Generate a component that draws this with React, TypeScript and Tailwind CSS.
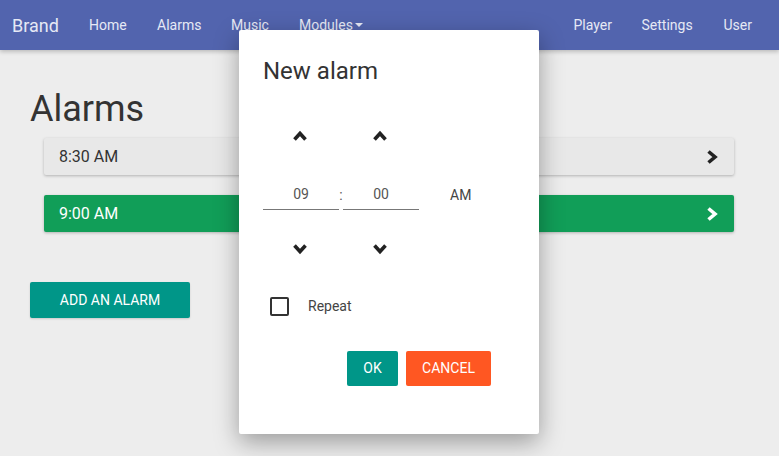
import React from "react";

function Chev({ dir, className }: { dir: "up" | "down" | "right"; className?: string }) {
  const pts =
    dir === "right" ? "3.5,1.5 10,7 3.5,12.5" : dir === "up" ? "1.5,10.5 7,4.5 12.5,10.5" : "1.5,3.5 7,9.5 12.5,3.5";
  return (
    <svg viewBox="0 0 14 14" className={className} fill="none">
      <polyline points={pts} stroke="currentColor" strokeWidth="3.6" strokeLinecap="butt" strokeLinejoin="miter" />
    </svg>
  );
}

export default function App() {
  return (
    <div className="relative w-[779px] h-[456px] overflow-hidden bg-[#ededed]" style={{ fontFamily: "Roboto, 'Liberation Sans', sans-serif" }}>
      <nav className="h-[50px] bg-[#5264ae] flex items-center text-[#e6e9f5] text-[14px] shadow-[0_2px_4px_rgba(0,0,0,0.2)]">
        <span className="ml-[12px] text-[18px] w-[77px]">Brand</span>
        <span className="w-[68px]">Home</span>
        <span className="w-[74px]">Alarms</span>
        <span className="w-[68px]">Music</span>
        <span className="flex items-center">Modules<span className="ml-[2px] inline-block w-0 h-0 border-l-[4px] border-r-[4px] border-t-[4px] border-l-transparent border-r-transparent border-t-[#e6e9f5]" /></span>
        <div className="ml-auto flex items-center mr-[27px]">
          <span className="w-[68px]">Player</span>
          <span className="w-[82px]">Settings</span>
          <span>User</span>
        </div>
      </nav>
      <main className="px-[30px] pt-[40px]">
        <h1 className="text-[36px] leading-[38px] text-[#333] ml-0">Alarms</h1>
        <div className="ml-[14px] mr-[15px] mt-[10px] flex flex-col gap-[20px]">
          <div className="h-[37px] bg-[#e8e8e8] rounded-[2px] shadow-[0_1px_3px_rgba(0,0,0,0.25)] flex items-center justify-between pl-[15px] pr-[15px] text-[16px] text-[#333]">
            <span>8:30 AM</span>
            <Chev dir="right" className="w-[14px] h-[14px] text-[#222]" />
          </div>
          <div className="h-[37px] bg-[#119e58] rounded-[2px] shadow-[0_1px_3px_rgba(0,0,0,0.25)] flex items-center justify-between pl-[15px] pr-[15px] text-[16px] text-white">
            <span>9:00 AM</span>
            <Chev dir="right" className="w-[14px] h-[14px] text-white" />
          </div>
        </div>
        <button className="mt-[50px] w-[160px] h-[36px] bg-[#009688] rounded-[2px] text-white text-[14px] uppercase shadow-[0_1px_2px_rgba(0,0,0,0.15)]">Add an alarm</button>
      </main>
      <div className="absolute left-[239px] top-[30px] w-[300px] h-[404px] bg-white rounded-[2px] shadow-[0_8px_24px_rgba(0,0,0,0.35)] px-[24px] pt-[28px]">
        <h2 className="text-[24px] leading-[26px] text-[#333]">New alarm</h2>
        <div className="mt-[40px] flex">
          <div className="w-[76px] flex flex-col items-center">
            <Chev dir="up" className="w-[14px] h-[14px] text-[#222] mt-[5px] ml-[-2px]" />
            <div className="mt-[37px] w-full h-[30px] border-b border-[#777] flex items-center justify-center text-[14px] text-[#555]">09</div>
            <Chev dir="down" className="w-[14px] h-[14px] text-[#222] mt-[32px] ml-[-2px]" />
          </div>
          <div className="w-[4px] text-[14px] text-[#555] mt-[56px] h-[30px] flex items-center justify-center">:</div>
          <div className="w-[76px] flex flex-col items-center">
            <Chev dir="up" className="w-[14px] h-[14px] text-[#222] mt-[5px] ml-[-2px]" />
            <div className="mt-[37px] w-full h-[30px] border-b border-[#777] flex items-center justify-center text-[14px] text-[#555]">00</div>
            <Chev dir="down" className="w-[14px] h-[14px] text-[#222] mt-[32px] ml-[-2px]" />
          </div>
          <div className="ml-[31px] mt-[56px] h-[30px] flex items-center text-[14px] text-[#444]">AM</div>
        </div>
        <div className="mt-[40px] ml-[7px] flex items-center">
          <div className="w-[19px] h-[19px] border-2 border-[#333] rounded-[2px]" />
          <span className="ml-[19px] text-[14px] text-[#444]">Repeat</span>
        </div>
        <div className="mt-[34px] flex justify-end gap-[8px] mr-[24px]">
          <button className="w-[51px] h-[35px] bg-[#009688] rounded-[2px] text-white text-[14px]">OK</button>
          <button className="w-[85px] h-[35px] bg-[#ff5722] rounded-[2px] text-white text-[14px]">CANCEL</button>
        </div>
      </div>
    </div>
  );
}
